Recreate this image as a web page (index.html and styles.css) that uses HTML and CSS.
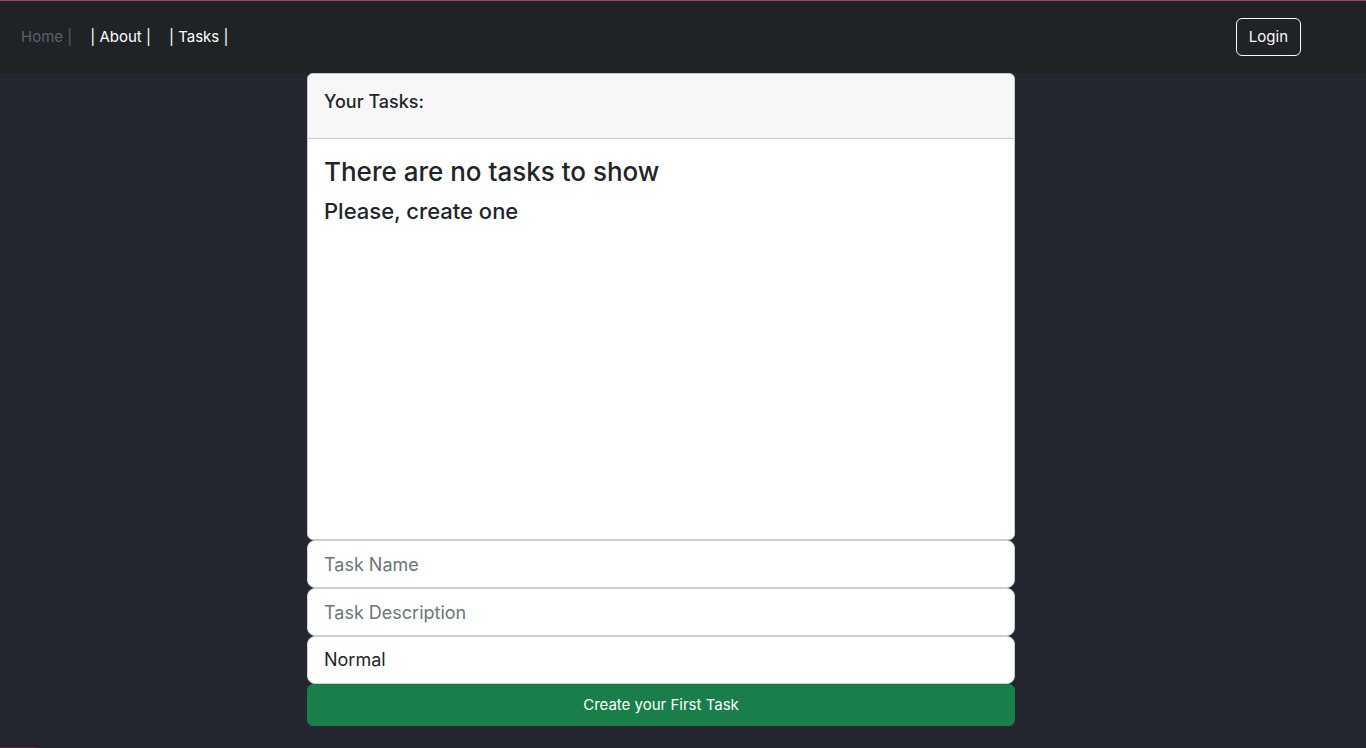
FILE: index.html
```html
<!DOCTYPE html>
<html lang="en">
<head>
<meta charset="utf-8">
<meta name="viewport" content="width=device-width, initial-scale=1">
<title>Tasks</title>
<link rel="stylesheet" href="styles.css">
</head>
<body>
<nav class="navbar">
  <div class="nav-links">
    <a class="nav-link active" href="#home">Home |</a>
    <a class="nav-link" href="#about">| About |</a>
    <a class="nav-link" href="#tasks">| Tasks |</a>
  </div>
  <button class="btn-login" type="button">Login</button>
</nav>
<main class="page">
  <div class="container">
    <section class="card">
      <header class="card-header"><h1 class="card-heading">Your Tasks:</h1></header>
      <div class="card-body">
        <h2 class="empty-title">There are no tasks to show</h2>
        <h3 class="empty-hint">Please, create one</h3>
      </div>
    </section>
    <form class="task-form">
      <input class="control" type="text" placeholder="Task Name" aria-label="Task Name">
      <input class="control" type="text" placeholder="Task Description" aria-label="Task Description">
      <select class="control" aria-label="Priority">
        <option>Low</option>
        <option selected>Normal</option>
        <option>High</option>
      </select>
      <button class="btn-create" type="submit">Create your First Task</button>
    </form>
  </div>
</main>
<div class="corner-strip"></div>
</body>
</html>
```
FILE: styles.css
```css
*, *::before, *::after {
  box-sizing: border-box;
}

body {
  margin: 0;
  min-height: 100vh;
  background: #24272f;
  color: #212529;
  font: 15px/24px Inter, "Liberation Sans", sans-serif;
}

.navbar {
  display: flex;
  align-items: center;
  justify-content: space-between;
  padding: 17px 65px 17px 13px;
  border-top: 1px solid #a83e69;
  background: #1f2326;
}

.nav-links {
  display: flex;
  gap: 2px;
}

.nav-link {
  padding: 0 8px;
  color: #fff;
  text-decoration: none;
}

.nav-link.active {
  color: #5a6167;
}

.btn-login {
  padding: 6px 12px;
  border: 1px solid #f8f9fa;
  border-radius: 6px;
  background: transparent;
  color: #f8f9fa;
  font: inherit;
}

.page {
  padding-right: 44px;
}

.container {
  width: 54%;
  max-width: 708px;
  margin: 0 auto;
}

.card {
  overflow: hidden;
  border: 1px solid #c8c9cb;
  border-radius: 6px;
  background: #fff;
}

.card-header {
  padding: 16px 16px 24px;
  border-bottom: 1px solid #c8c9cb;
  background: #f7f7f7;
}

.card-heading,
.empty-title,
.empty-hint {
  margin: 0;
  font-weight: 500;
}

.card-heading {
  font-size: 18px;
  line-height: 24px;
}

.card-body {
  min-height: 400px;
  padding: 16px;
}

.empty-title {
  margin-bottom: 8px;
  font-size: 26px;
  line-height: 34px;
}

.empty-hint {
  font-size: 22px;
  line-height: 28px;
}

.task-form {
  display: flex;
  flex-direction: column;
}

.control {
  width: 100%;
  height: 48px;
  padding: 8px 16px;
  border: 1px solid #c8d0d8;
  border-radius: 8px;
  background: #fff;
  color: #212529;
  font: inherit;
  font-size: 18px;
  line-height: 30px;
  appearance: none;
}

.control::placeholder {
  color: #6c757d;
  opacity: 1;
}

.btn-create {
  padding: 8px 12px;
  border: 1px solid #1a7e4b;
  border-radius: 6px;
  background: #1a7e4b;
  color: #fff;
  font: inherit;
}

.corner-strip {
  position: fixed;
  bottom: 0;
  left: 0;
  width: 37px;
  height: 1px;
  background: #6a1f40;
  box-shadow: 0 0 3px #14161a;
}
```
